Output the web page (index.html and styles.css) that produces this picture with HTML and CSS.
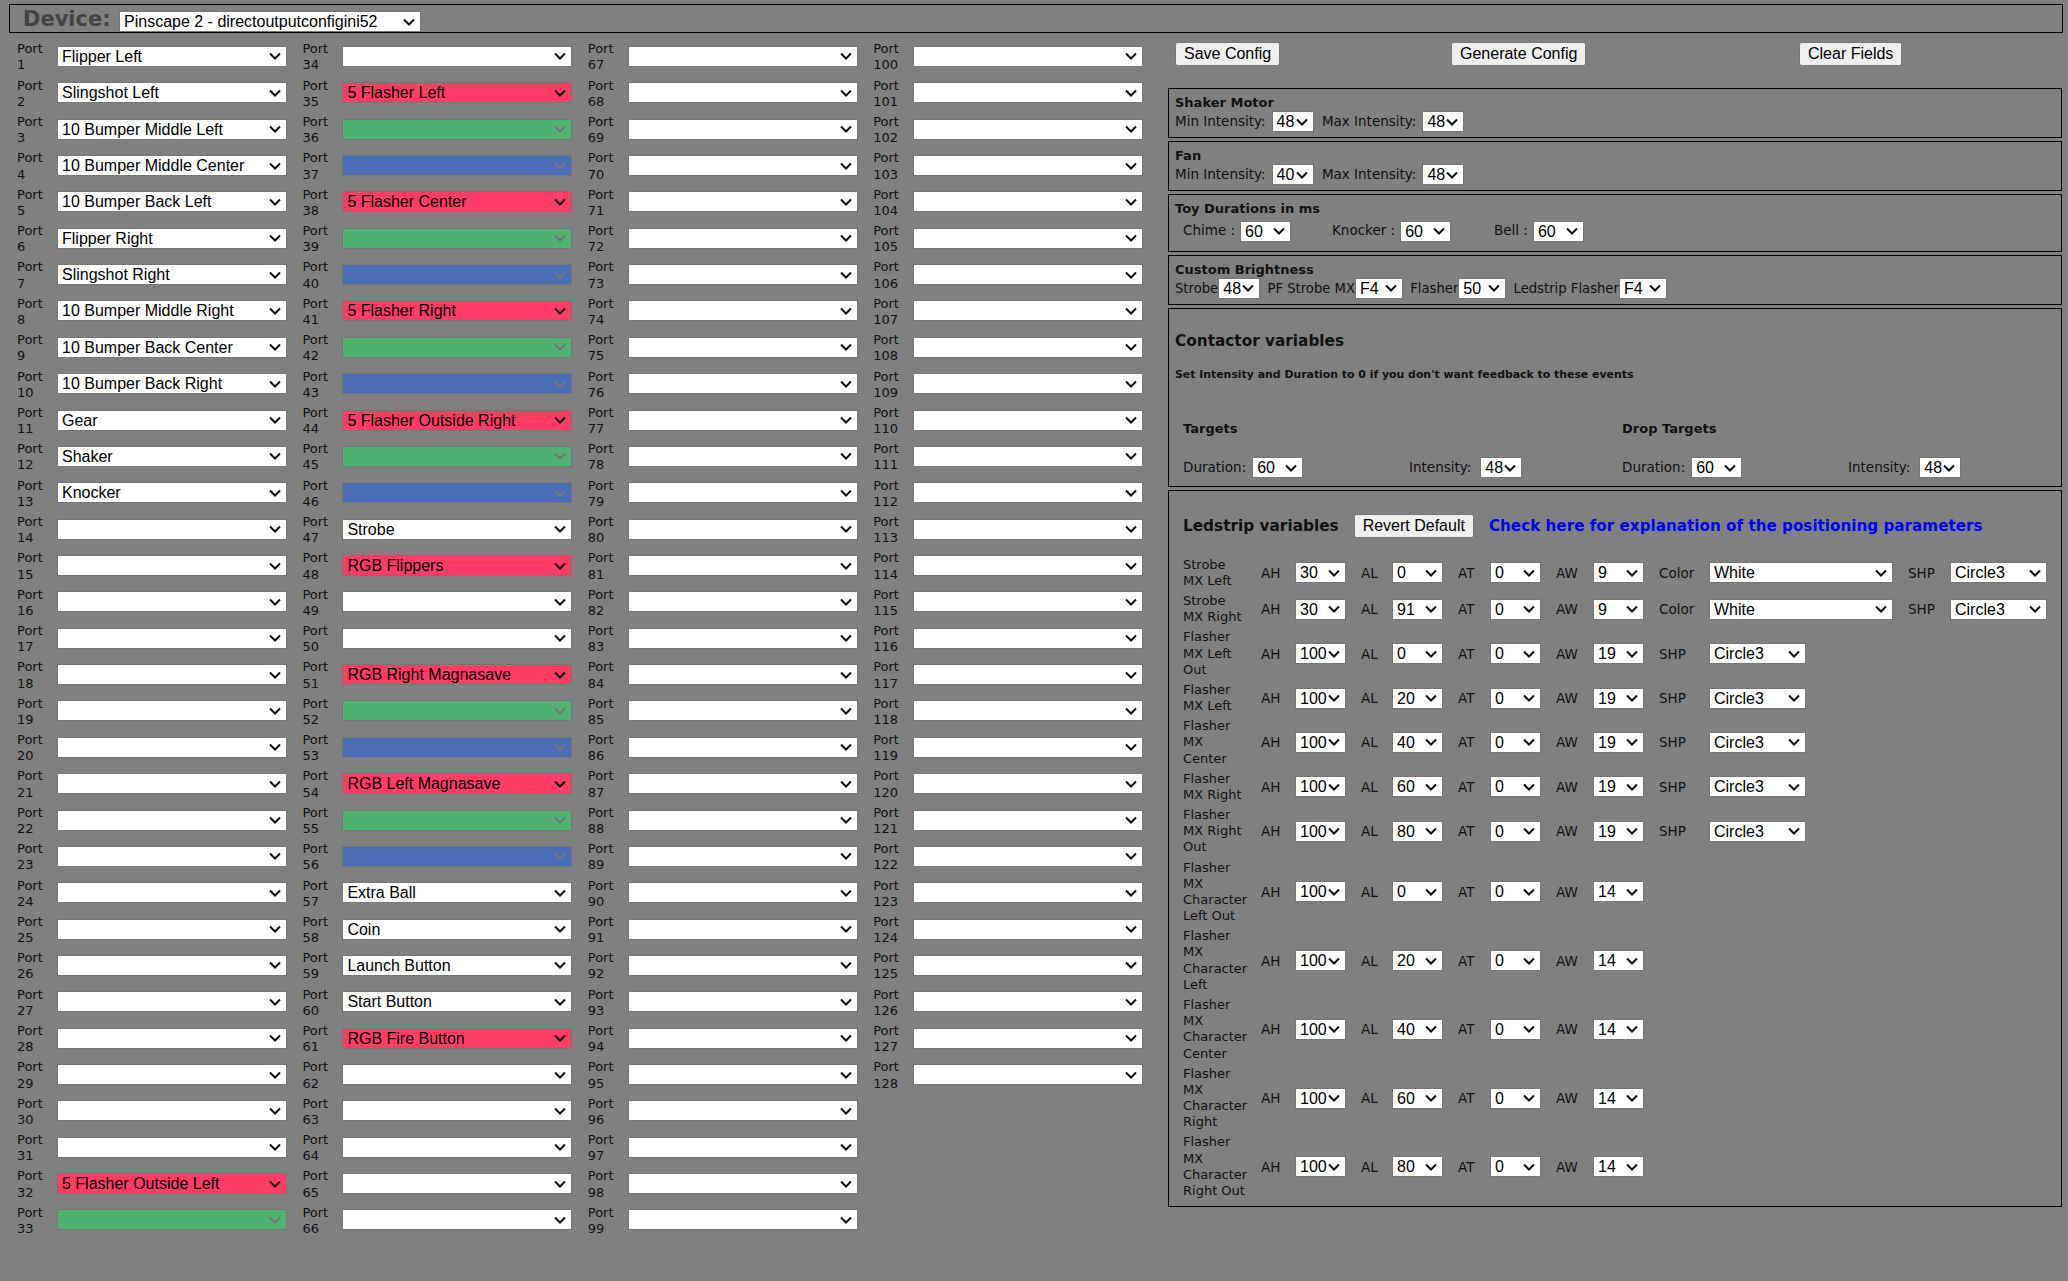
FILE: index.html
```html
<!DOCTYPE html>
<html lang="en">
<head>
  <meta charset="UTF-8" />
  <title>DOF Config Tool</title>
  <link rel="stylesheet" href="styles.css">
</head>
<body>

  <div class="device-bar">
    <span class="device-title">Device:</span>
    <select class="device-select"><option>Pinscape 2 - directoutputconfigini52</option></select>
  </div>

  <div class="main">
    <div class="ports" id="ports"></div>

    <div class="side">
      <div class="actions">
        <div><button>Save Config</button></div>
        <div><button>Generate Config</button></div>
        <div><button>Clear Fields</button></div>
      </div>

      <div class="panel">
        <div class="panel-title">Shaker Motor</div>
        <div class="field-row">
          <label>Min Intensity:</label><select class="w42"><option>48</option></select>
          <label>Max Intensity:</label><select class="w42"><option>48</option></select>
        </div>
      </div>

      <div class="panel">
        <div class="panel-title">Fan</div>
        <div class="field-row">
          <label>Min Intensity:</label><select class="w42"><option>40</option></select>
          <label>Max Intensity:</label><select class="w42"><option>48</option></select>
        </div>
      </div>

      <div class="panel">
        <div class="panel-title">Toy Durations in ms</div>
        <div class="toy-row">
          <div class="toy-chime"><label>Chime :</label><select class="w51"><option>60</option></select></div>
          <div class="toy-knocker"><label>Knocker :</label><select class="w51"><option>60</option></select></div>
          <div><label>Bell :</label><select class="w51"><option>60</option></select></div>
        </div>
      </div>

      <div class="panel">
        <div class="panel-title">Custom Brightness</div>
        <div class="field-row tight">
          <label>Strobe</label><select class="w42"><option>48</option></select>
          <label>PF Strobe MX</label><select class="w48"><option>F4</option></select>
          <label>Flasher</label><select class="w48"><option>50</option></select>
          <label>Ledstrip Flasher</label><select class="w48"><option>F4</option></select>
        </div>
      </div>

      <div class="panel contactor">
        <div class="big-title">Contactor variables</div>
        <div class="note">Set Intensity and Duration to 0 if you don't want feedback to these events</div>
        <div class="target-grid">
          <div class="panel-title">Targets</div>
          <div></div>
          <div class="panel-title">Drop Targets</div>
          <div></div>
          <div><label>Duration:</label><select class="w51"><option>60</option></select></div>
          <div class="intensity"><label>Intensity:</label><select class="w42"><option>48</option></select></div>
          <div><label>Duration:</label><select class="w51"><option>60</option></select></div>
          <div class="intensity"><label>Intensity:</label><select class="w42"><option>48</option></select></div>
        </div>
      </div>

      <div class="panel ledstrip">
        <div class="ledstrip-head">
          <span class="big-title">Ledstrip variables</span>
          <button>Revert Default</button>
          <a href="#">Check here for explanation of the positioning parameters</a>
        </div>
        <table class="led-table">
          <colgroup>
            <col class="c-name"><col class="c-ah"><col class="c-sel"><col class="c-al"><col class="c-sel">
            <col class="c-at"><col class="c-sel"><col class="c-aw"><col class="c-sel"><col class="c-color">
            <col class="c-wide"><col class="c-shp"><col class="c-last">
          </colgroup>
          <tbody id="ledRows"></tbody>
        </table>
      </div>
    </div>
  </div>

  <script>
    const names = {
      1: "Flipper Left", 2: "Slingshot Left", 3: "10 Bumper Middle Left", 4: "10 Bumper Middle Center",
      5: "10 Bumper Back Left", 6: "Flipper Right", 7: "Slingshot Right", 8: "10 Bumper Middle Right",
      9: "10 Bumper Back Center", 10: "10 Bumper Back Right", 11: "Gear", 12: "Shaker", 13: "Knocker",
      32: "5 Flasher Outside Left", 35: "5 Flasher Left", 38: "5 Flasher Center", 41: "5 Flasher Right",
      44: "5 Flasher Outside Right", 47: "Strobe", 48: "RGB Flippers", 51: "RGB Right Magnasave",
      54: "RGB Left Magnasave", 57: "Extra Ball", 58: "Coin", 59: "Launch Button", 60: "Start Button",
      61: "RGB Fire Button"
    };
    const redPorts = [32, 35, 38, 41, 44, 48, 51, 54, 61];
    const greenPorts = [33, 36, 39, 42, 45, 52, 55];
    const bluePorts = [37, 40, 43, 46, 53, 56];

    const ports = document.getElementById("ports");
    const columns = [[1, 33], [34, 66], [67, 99], [100, 128]];

    columns.forEach(([from, to]) => {
      const col = document.createElement("div");
      col.className = "port-col";
      for (let i = from; i <= to; i++) {
        let cls = "port-select";
        if (redPorts.includes(i)) cls += " red";
        if (greenPorts.includes(i)) cls += " green";
        if (bluePorts.includes(i)) cls += " blue";
        col.innerHTML += `<div class="port-row"><div class="port-label">Port<br>${i}</div>` +
          `<select class="${cls}"><option>${names[i] || ""}</option></select></div>`;
      }
      ports.appendChild(col);
    });

    const leds = [
      ["Strobe MX Left", 30, 0, 9, "color"],
      ["Strobe MX Right", 30, 91, 9, "color"],
      ["Flasher MX Left Out", 100, 0, 19, "shape"],
      ["Flasher MX Left", 100, 20, 19, "shape"],
      ["Flasher MX Center", 100, 40, 19, "shape"],
      ["Flasher MX Right", 100, 60, 19, "shape"],
      ["Flasher MX Right Out", 100, 80, 19, "shape"],
      ["Flasher MX Character Left Out", 100, 0, 14],
      ["Flasher MX Character Left", 100, 20, 14],
      ["Flasher MX Character Center", 100, 40, 14],
      ["Flasher MX Character Right", 100, 60, 14],
      ["Flasher MX Character Right Out", 100, 80, 14]
    ];

    const pick = (cls, val) => `<td><select class="${cls}"><option>${val}</option></select></td>`;

    document.getElementById("ledRows").innerHTML = leds.map(([name, ah, al, aw, extra]) => {
      let tail = "";
      if (extra === "color") {
        tail = `<td>Color</td>` + pick("w184", "White") + `<td>SHP</td>` + pick("w97", "Circle3");
      } else if (extra === "shape") {
        tail = `<td>SHP</td>` + pick("w97", "Circle3");
      }
      return `<tr><td class="led-name">${name}</td>` +
        `<td>AH</td>` + pick("w51", ah) +
        `<td>AL</td>` + pick("w51", al) +
        `<td>AT</td>` + pick("w51", 0) +
        `<td>AW</td>` + pick("w51", aw) + tail + `</tr>`;
    }).join("");
  </script>
</body>
</html>
```

FILE: styles.css
```css
:root {
  --color-bg: #808080;
  --color-red: #ff3d67;
  --color-green: #4fb273;
  --color-blue: #4a6db5;
  --row-h: 36.36px;
  --chevron: url("data:image/svg+xml,%3Csvg xmlns='http://www.w3.org/2000/svg' width='12' height='8'%3E%3Cpath d='M1 1.5l5 5 5-5' fill='none' stroke='%23111' stroke-width='2'/%3E%3C/svg%3E");
  --chevron-off: url("data:image/svg+xml,%3Csvg xmlns='http://www.w3.org/2000/svg' width='12' height='8'%3E%3Cpath d='M1 1.5l5 5 5-5' fill='none' stroke='%23757575' stroke-width='2'/%3E%3C/svg%3E");
}

body {
  margin: 0;
  min-height: 100vh;
  background: var(--color-bg);
  color: #111;
  font-family: "DejaVu Sans", Verdana, sans-serif;
  font-size: 13px;
  line-height: 16.17px;
}

select,
button {
  font-family: "Liberation Sans", Arial, sans-serif;
  font-size: 16px;
  color: #000;
}

select {
  appearance: none;
  height: 21px;
  box-sizing: border-box;
  padding: 0 16px 0 4px;
  border: 1px solid #767676;
  border-radius: 0;
  background: #fff var(--chevron) no-repeat right 5px center;
  vertical-align: middle;
}

button {
  padding: 1px 7px;
}

.device-bar {
  margin: 4px 5px 0 9px;
  height: 21px;
  border: 1px solid #000;
  display: flex;
  align-items: center;
  padding: 6px 0 0 13px;
}

.device-title {
  width: 96px;
  margin-bottom: 5px;
  font-size: 21px;
  font-weight: 700;
  color: #444;
}

.device-select {
  width: 302px;
}

.main {
  display: flex;
  align-items: flex-start;
}

.ports {
  display: flex;
  width: 1168px;
  flex: none;
  padding: 5.3px 0 0 17px;
  box-sizing: border-box;
}

.port-col {
  width: 285.4px;
  flex: none;
}

.port-row {
  height: var(--row-h);
  display: flex;
  align-items: center;
}

.port-label {
  width: 40px;
  flex: none;
  padding-top: 2px;
}

.port-select {
  width: 230px;
}

.port-select.red {
  background-color: var(--color-red);
}

.port-select.green {
  background-color: var(--color-green);
  background-image: var(--chevron-off);
}

.port-select.blue {
  background-color: var(--color-blue);
  background-image: var(--chevron-off);
}

.side {
  width: 894px;
  flex: none;
  font-size: 13.5px;
}

.actions {
  display: grid;
  grid-template-columns: 276px 348px auto;
  padding: 9px 0 22px 7px;
}

.panel {
  border: 1px solid #000;
  padding: 6px 6px 5px;
  margin-bottom: 3px;
}

.panel-title {
  font-size: 13px;
  font-weight: 700;
}

.field-row label {
  margin-right: 6px;
}

.field-row select {
  margin-right: 4px;
}

.field-row.tight {
  font-size: 13.2px;
}

.field-row.tight label {
  margin-right: 0;
}

.field-row.tight select {
  margin-right: 3px;
}

.toy-row {
  display: flex;
  padding: 3px 0 4px 8px;
}

.toy-row label {
  margin-right: 5px;
}

.toy-chime {
  width: 149px;
}

.toy-knocker {
  width: 162px;
}

.w42 { width: 42px; }
.w48 { width: 48px; }
.w51 { width: 51px; }
.w97 { width: 97px; }
.w184 { width: 184px; }

.big-title {
  font-size: 15.3px;
  font-weight: 700;
}

.contactor {
  height: 179px;
  box-sizing: border-box;
  padding-top: 24px;
}

.note {
  margin-top: 18px;
  font-size: 10.9px;
  font-weight: 700;
}

.target-grid {
  display: grid;
  grid-template-columns: 226px 213px 226px auto;
  grid-template-rows: 30px 41px;
  align-items: end;
  margin: 24px 0 0 8px;
}

.target-grid label {
  margin-right: 6px;
}

.target-grid .intensity label {
  margin-right: 9px;
}

.ledstrip {
  padding: 23px 6px 5px 14px;
}

.ledstrip-head {
  display: flex;
  align-items: center;
  margin-bottom: 17px;
}

.ledstrip-head button {
  margin: 0 15px;
}

.ledstrip-head a {
  font-size: 15.2px;
  font-weight: 700;
  color: #0000ee;
  text-decoration: none;
}

.led-table {
  border-collapse: collapse;
  table-layout: fixed;
  width: 863px;
}

.led-table td {
  padding: 2px 0;
}

.led-table td.led-name {
  padding-right: 12px;
  font-size: 13px;
}

.c-name { width: 78px; }
.c-ah { width: 34px; }
.c-al { width: 31px; }
.c-at { width: 32px; }
.c-aw { width: 37px; }
.c-sel { width: 66px; }
.c-color { width: 50px; }
.c-wide { width: 199px; }
.c-shp { width: 42px; }
.c-last { width: 97px; }
```
